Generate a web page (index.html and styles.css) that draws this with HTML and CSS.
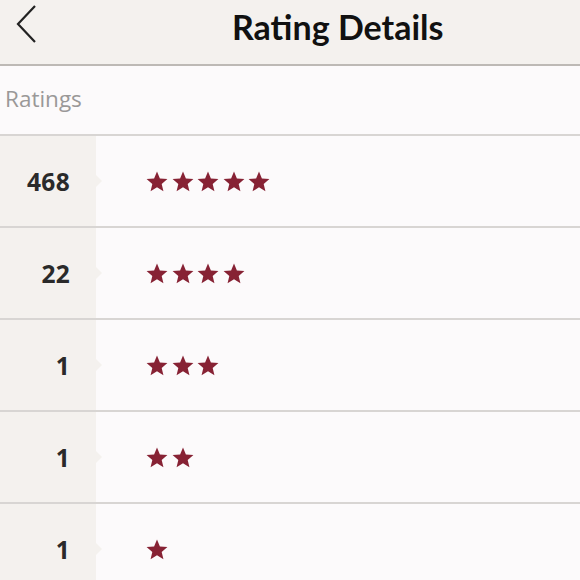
FILE: index.html
```html
<!DOCTYPE html>
<html>
<head>
<meta charset="utf-8">
<link rel="stylesheet" href="styles.css">
</head>
<body>
<div class="app">
  <header class="header">
    <svg class="back" width="24" height="40" viewBox="0 0 24 40"><path d="M20 2 L3 20 L20 38" fill="none" stroke="#222" stroke-width="2.2"/></svg>
    <h1 class="title">Rating Details</h1>
  </header>
  <div class="section">Ratings</div>
  <div class="row"><div class="count">468</div><div class="stars" data-n="5"></div></div>
  <div class="row"><div class="count">22</div><div class="stars" data-n="4"></div></div>
  <div class="row"><div class="count">1</div><div class="stars" data-n="3"></div></div>
  <div class="row"><div class="count">1</div><div class="stars" data-n="2"></div></div>
  <div class="row"><div class="count">1</div><div class="stars" data-n="1"></div></div>
</div>
<script src="app.js"></script>
</body>
</html>
```
FILE: app.js
```js
document.querySelectorAll('.stars').forEach(function (el) {
  var n = +el.getAttribute('data-n');
  var html = '';
  for (var i = 0; i < n; i++) {
    html += '<svg class="star" width="22" height="21" viewBox="0 0 24 23"><path d="M12 0.5 L15.17 8.13 L23.41 8.79 L17.14 14.17 L19.05 22.21 L12 17.9 L4.95 22.21 L6.86 14.17 L0.59 8.79 L8.83 8.13 Z" fill="#872234"/></svg>';
  }
  el.innerHTML = html;
});
```
FILE: styles.css
```css
* { box-sizing: border-box; }
html, body { margin: 0; padding: 0; }
body { background: #fcfafb; font-family: "Open Sans", Lato, sans-serif; width: 580px; height: 580px; overflow: hidden; }
.app { display: flex; flex-direction: column; }
.header {
  height: 66px;
  background: #f4f1ee;
  border-bottom: 2px solid #bdb9b5;
  display: flex;
  align-items: center;
}
.back { margin-left: 15px; margin-top: -16px; }
.title {
  margin: -12px 0 0 193px;
  font-family: Lato, sans-serif;
  font-size: 34px;
  font-weight: 700;
  color: #111;
}
.section {
  height: 70px;
  padding-left: 5px;
  padding-bottom: 4px;
  display: flex;
  align-items: center;
  font-size: 22.5px;
  color: #9a9898;
  border-bottom: 2px solid #d8d5d3;
}
.row {
  height: 92px;
  display: flex;
  border-bottom: 2px solid #d8d5d3;
}
.count {
  width: 96px;
  background: #f4f1ee;
  display: flex;
  align-items: center;
  justify-content: flex-end;
  padding-right: 26px;
  font-size: 24.5px;
  font-weight: 700;
  letter-spacing: 0.3px;
  color: #2a2a2a;
  position: relative;
}
.count::after {
  content: "";
  position: absolute;
  right: -6px;
  top: 50%;
  margin-top: -6px;
  border-top: 6px solid transparent;
  border-bottom: 6px solid transparent;
  border-left: 6px solid #f4f1ee;
}
.stars {
  display: flex;
  align-items: center;
  gap: 3.6px;
  padding-left: 50px;
}
.star { display: block; }
```
